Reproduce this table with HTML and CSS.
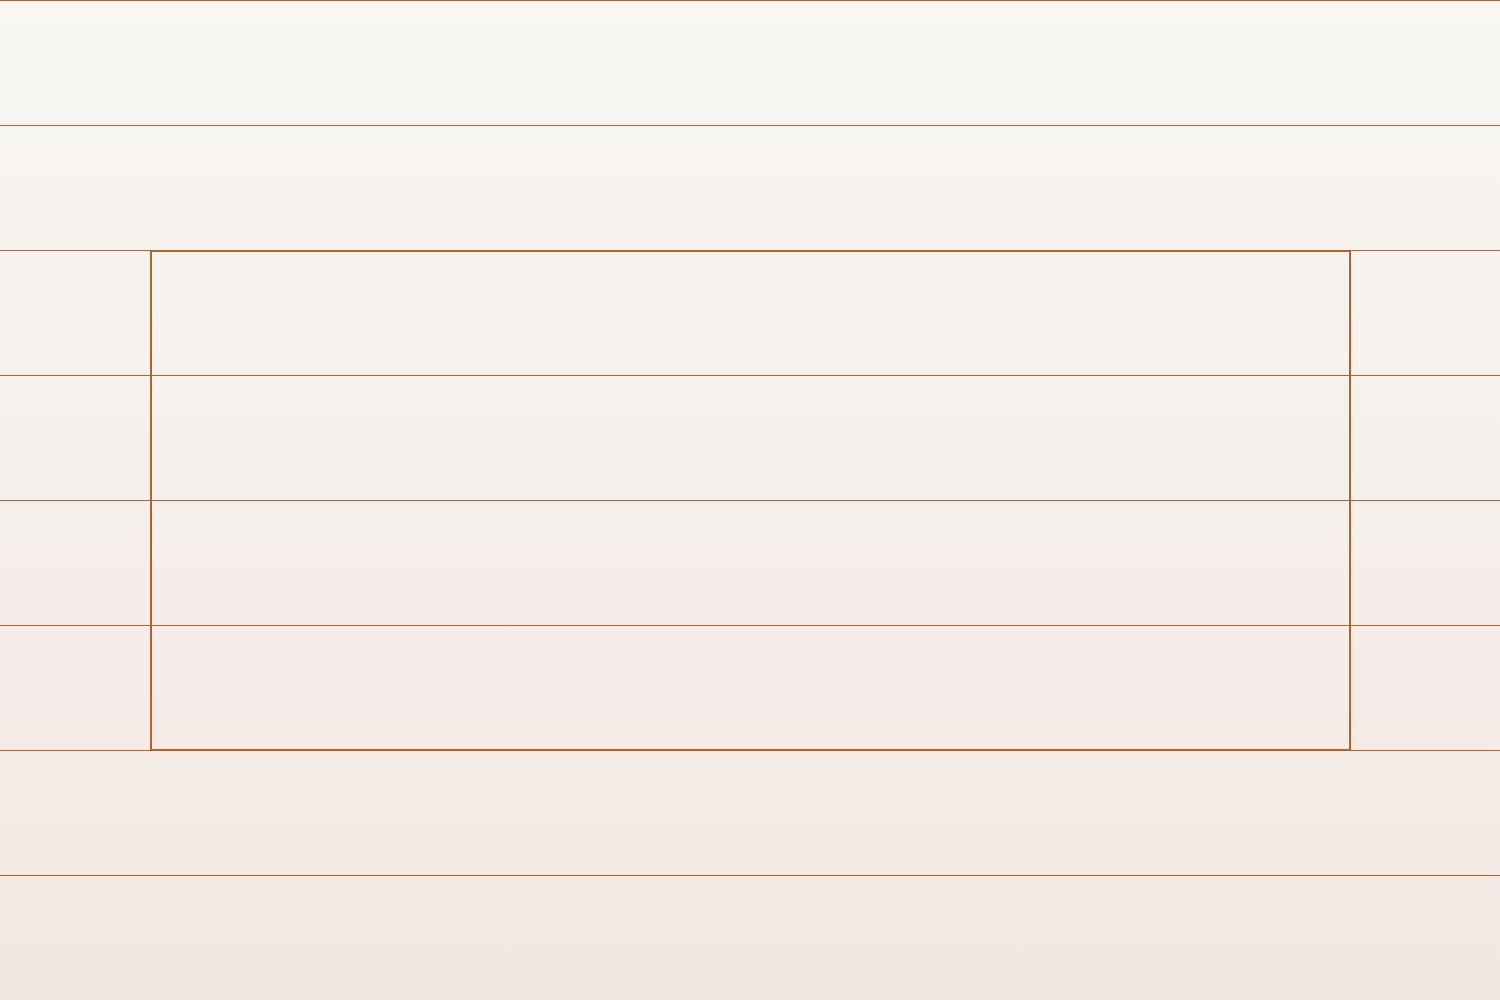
FILE: index.html
```html
<!DOCTYPE html>
<html lang="en">
<head>
    <meta charset="UTF-8">
    <meta name="viewport" content="width=device-width, initial-scale=1.0">
    <title>Grid</title>
    <link rel="stylesheet" href="styles.css">
</head>
<body>

    <div class="sheet">
        <div class="row"></div>
        <div class="row"></div>

        <!-- Framed block -->
        <div class="row split"><div class="side"></div><div class="mid top"></div><div class="side"></div></div>
        <div class="row split"><div class="side"></div><div class="mid"></div><div class="side"></div></div>
        <div class="row split"><div class="side"></div><div class="mid"></div><div class="side"></div></div>
        <div class="row split"><div class="side"></div><div class="mid bottom"></div><div class="side"></div></div>

        <div class="row"></div>
        <div class="row"></div>
    </div>

</body>
</html>
```

FILE: styles.css
```css
html, body {
    margin: 0;
    padding: 0;
}
body {
    height: 1000px;
    background: linear-gradient(180deg, #f8f7f4, #f2e7e2);
    overflow: hidden;
}
.sheet {
    display: flex;
    flex-direction: column;
}
.row {
    box-sizing: border-box;
    height: 125px;
    border-top: 1px solid #b3632a;
}
.split {
    display: grid;
    grid-template-columns: 150px 1fr 149px;
}
.mid {
    border-left: 2px solid #b3632a;
    border-right: 2px solid #b3632a;
}
.mid.top {
    border-top: 1px solid #b3632a;
}
.mid.bottom {
    border-bottom: 1px solid #b3632a;
}
```
